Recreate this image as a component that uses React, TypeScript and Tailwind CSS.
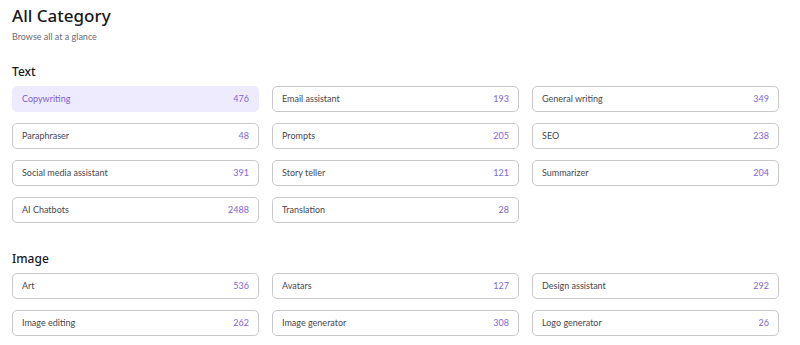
const textCats = [
  { name: "Copywriting", count: 476, active: true },
  { name: "Email assistant", count: 193 },
  { name: "General writing", count: 349 },
  { name: "Paraphraser", count: 48 },
  { name: "Prompts", count: 205 },
  { name: "SEO", count: 238 },
  { name: "Social media assistant", count: 391 },
  { name: "Story teller", count: 121 },
  { name: "Summarizer", count: 204 },
  { name: "AI Chatbots", count: 2488 },
  { name: "Translation", count: 28 },
];

const imageCats = [
  { name: "Art", count: 536 },
  { name: "Avatars", count: 127 },
  { name: "Design assistant", count: 292 },
  { name: "Image editing", count: 262 },
  { name: "Image generator", count: 308 },
  { name: "Logo generator", count: 26 },
];

type Cat = { name: string; count: number; active?: boolean };

const CategoryGrid = ({ items }: { items: Cat[] }) => (
  <div className="grid grid-cols-[247px_247px_247px] gap-x-[13px] gap-y-[11px]">
    {items.map((c) => (
      <div
        key={c.name}
        className={
          c.active
            ? "h-[26px] flex items-center justify-between pl-[9px] pr-[9px] rounded-[5px] bg-[#efebfe] border border-[#efebfe] text-[#7b5fd0]"
            : "h-[26px] flex items-center justify-between pl-[9px] pr-[9px] rounded-[5px] bg-white border border-[#c9c9cc] text-[#48484f]"
        }
      >
        <span className="text-[9px]">{c.name}</span>
        <span className="text-[9px] text-[#8065d6]">{c.count}</span>
      </div>
    ))}
  </div>
);

export default function App() {
  return (
    <div className="w-[800px] h-[345px] bg-white overflow-hidden px-[12px] pt-[5px] font-['Lato',sans-serif]">
      <h1 className="text-[17px] leading-[22px] text-[#18181b] font-medium font-['Noto_Sans',sans-serif]">All Category</h1>
      <p className="text-[9px] leading-[12px] mt-[4px] text-[#6b6b76]">Browse all at a glance</p>

      <h2 className="text-[12px] leading-[16px] font-medium text-[#18181b] mt-[21px] mb-[6px] font-['Noto_Sans',sans-serif]">Text</h2>
      <CategoryGrid items={textCats} />

      <h2 className="text-[12px] leading-[16px] font-medium text-[#18181b] mt-[28px] mb-[6px] font-['Noto_Sans',sans-serif]">Image</h2>
      <CategoryGrid items={imageCats} />
    </div>
  );
}
